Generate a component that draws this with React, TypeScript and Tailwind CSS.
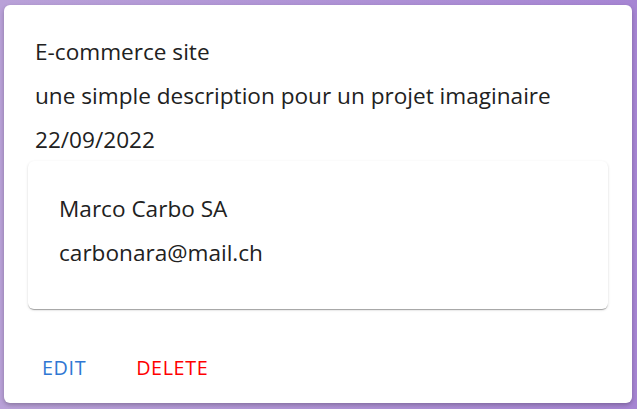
export default function App() {
  return (
    <div className="w-[637px] h-[409px] bg-gradient-to-r from-[#b9a1d8] to-[#a685d3] pt-[5px] pl-[4px] pr-[5px] pb-[6px] font-['Open_Sans',sans-serif]">
      <div className="flex h-full flex-col rounded-[6px] bg-white shadow-[0_2px_4px_rgba(0,0,0,0.25)]">
        {/* Project info */}
        <div className="px-[31px] pt-[25px] text-[22.6px] leading-[44px] text-[#212121]">
          <p>E-commerce site</p>
          <p>une simple description pour un projet imaginaire</p>
          <p>22/09/2022</p>
        </div>

        {/* Client card */}
        <div className="mx-[24px] mt-[-1px] rounded-[6px] bg-white pl-[31px] pt-[26px] pb-[34px] text-[22.6px] leading-[44px] text-[#212121] shadow-[0_2px_1px_-1px_rgba(0,0,0,0.2),0_1px_1px_0_rgba(0,0,0,0.14),0_1px_3px_0_rgba(0,0,0,0.12)]">
          <p>Marco Carbo SA</p>
          <p>carbonara@mail.ch</p>
        </div>

        {/* Actions */}
        <div className="flex items-center gap-[34px] pl-[30px] pt-[47px]">
          <button type="button" className="px-[8px] text-[19.8px] leading-[24px] tracking-[0.03em] text-[#2f77d3]">
            EDIT
          </button>
          <button type="button" className="px-[8px] text-[19.8px] leading-[24px] tracking-[0.03em] text-[#ff0000]">
            DELETE
          </button>
        </div>
      </div>
    </div>
  )
}
